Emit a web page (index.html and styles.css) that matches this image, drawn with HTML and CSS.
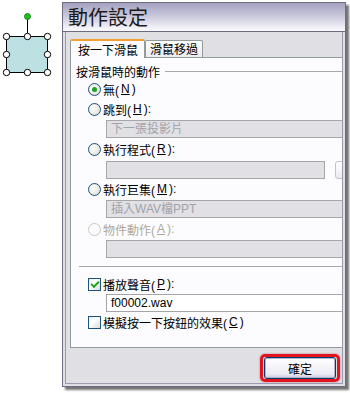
FILE: index.html
```html
<!DOCTYPE html>
<html lang="zh-Hant">
<head>
    <meta charset="UTF-8">
    <title>動作設定</title>
    <link rel="stylesheet" href="styles.css">
</head>
<body>
    <div class="stage">
        <svg class="shape" width="62" height="100" viewBox="0 0 62 100">
            <line x1="27.5" y1="19" x2="27.5" y2="36" stroke="#000" stroke-width="1"/>
            <rect x="6.5" y="36.5" width="41" height="36" fill="#bde0e2" stroke="#000" stroke-width="1"/>
            <circle cx="27.5" cy="16.5" r="3" fill="#1fc41f" stroke="#0a6a0a" stroke-width="0.8"/>
            <g fill="#fff" stroke="#000" stroke-width="1">
                <circle cx="6.5" cy="36.5" r="3.2"/>
                <circle cx="27.5" cy="36.5" r="3.2"/>
                <circle cx="47.5" cy="36.5" r="3.2"/>
                <circle cx="6.5" cy="54.5" r="3.2"/>
                <circle cx="47.5" cy="54.5" r="3.2"/>
                <circle cx="6.5" cy="72.5" r="3.2"/>
                <circle cx="27.5" cy="72.5" r="3.2"/>
                <circle cx="47.5" cy="72.5" r="3.2"/>
            </g>
        </svg>

        <div class="dialog">
            <div class="titlebar">動作設定</div>
            <div class="dlg-body">
                <div class="tabs">
                    <div class="tab active">按一下滑鼠</div>
                    <div class="tab">滑鼠移過</div>
                </div>
                <div class="panel">
                    <div class="group-title"><span>按滑鼠時的動作</span></div>

                    <div class="opt"><span class="radio checked"></span>無(<u>N</u>)</div>
                    <div class="opt"><span class="radio"></span>跳到(<u>H</u>):</div>
                    <div class="field disabled">下一張投影片</div>

                    <div class="opt"><span class="radio"></span>執行程式(<u>R</u>):</div>
                    <div class="field-row">
                        <div class="field disabled short"></div>
                        <div class="browse"></div>
                    </div>

                    <div class="opt"><span class="radio"></span>執行巨集(<u>M</u>):</div>
                    <div class="field disabled">插入WAV檔PPT</div>

                    <div class="opt off"><span class="radio"></span>物件動作(<u>A</u>):</div>
                    <div class="field disabled"></div>

                    <div class="separator"></div>

                    <div class="opt check-row"><span class="checkbox checked"></span>播放聲音(<u>P</u>):</div>
                    <div class="field sound">f00002.wav</div>
                    <div class="opt check-row"><span class="checkbox"></span>模擬按一下按鈕的效果(<u>C</u>)</div>
                </div>
                <div class="footer">
                    <div class="ok-ring">
                        <button type="button" class="ok">確定</button>
                    </div>
                </div>
            </div>
        </div>
    </div>
</body>
</html>
```

FILE: styles.css
```css
body {
    margin: 0;
    background: #fff;
    font-family: "Liberation Sans", "Noto Sans CJK TC", sans-serif;
    font-size: 12px;
    color: #000;
}
.stage {
    display: flex;
    align-items: flex-start;
    width: 350px;
    height: 393px;
    overflow: hidden;
}
.shape {
    flex: none;
}
.dialog {
    flex: none;
    width: 284px;
    height: 385px;
    margin-top: 2px;
    box-sizing: border-box;
    border: 1px solid #6f6d84;
    padding: 0 2px 2px;
    background: #e0dfe3;
    overflow: hidden;
    box-shadow: 3px 3px 2px rgba(0, 0, 0, 0.55);
    display: flex;
    flex-direction: column;
}
.titlebar {
    margin: 0 -2px;
    height: 28px;
    border-bottom: 1px solid #6d6b80;
    background: linear-gradient(#a4a1bf, #c4c2d8 40%, #f7f7fb 95%);
    font-family: "Noto Sans CJK TC", sans-serif;
    font-size: 20px;
    line-height: 27px;
    color: #1b1b1b;
    padding-left: 5px;
}
.dlg-body {
    flex: 1;
    border: 1px solid #9c9ab0;
    border-top: none;
    padding: 6px 0 0 4px;
    overflow: hidden;
    display: flex;
    flex-direction: column;
}
.tabs {
    display: flex;
    align-items: flex-end;
    height: 19px;
    position: relative;
    z-index: 1;
}
.tab {
    font-family: "Noto Sans CJK TC", sans-serif;
    height: 16px;
    line-height: 16px;
    padding: 0 4px;
    border: 1px solid #919b9c;
    border-bottom: none;
    border-radius: 2px 2px 0 0;
    background: linear-gradient(#ffffff, #ecebf0);
}
.tab.active {
    height: 17px;
    line-height: 18px;
    padding: 0 6px 0 7px;
    border-top: 2px solid #f0a030;
    background: #fcfcfe;
    margin-bottom: -1px;
}
.panel {
    width: 290px;
    height: 289px;
    border: 1px solid #919b9c;
    background: #fcfcfe;
    padding-top: 5px;
    box-sizing: border-box;
    height: 291px;
}
.group-title {
    display: flex;
    align-items: center;
    height: 16px;
    padding-left: 5px;
    font-family: "Noto Sans CJK TC", sans-serif;
}
.group-title::after {
    content: "";
    flex: 1;
    margin-left: 5px;
    border-top: 1px solid #a8a7ab;
}
.opt {
    display: flex;
    align-items: center;
    gap: 2px;
    height: 20px;
    padding-left: 17px;
}
.opt.off {
    color: #aca899;
}
.radio {
    width: 11px;
    height: 11px;
    border: 1px solid #1c5180;
    border-radius: 50%;
    background: radial-gradient(circle at 35% 35%, #ffffff, #e4e4de 70%, #c9c9c2);
    display: flex;
    align-items: center;
    justify-content: center;
}
.radio.checked::after {
    content: "";
    width: 5px;
    height: 5px;
    border-radius: 50%;
    background: #21a121;
}
.opt.off .radio {
    border-color: #cac8bb;
    background: #fcfcfe;
}
.checkbox {
    width: 11px;
    height: 11px;
    border: 1px solid #1c5180;
    background: linear-gradient(135deg, #ececea, #ffffff 40%, #dcdcd6);
    display: flex;
    align-items: center;
    justify-content: center;
}
.checkbox.checked::after {
    content: "";
    width: 6px;
    height: 3px;
    border-left: 2px solid #21a121;
    border-bottom: 2px solid #21a121;
    transform: translateY(-1px) rotate(-45deg);
}
.field {
    margin-left: 35px;
    width: 250px;
    height: 18px;
    box-sizing: border-box;
    border: 1px solid #a6a5aa;
    line-height: 16px;
    padding-left: 4px;
}
.field.disabled {
    background: #e1e0e5;
    color: #a3a2a6;
    margin-top: 1px;
    margin-bottom: 1px;
}
.field-row {
    display: flex;
    gap: 10px;
    margin-top: 2px;
}
.field.short {
    width: 222px;
    margin: 0 0 0 35px;
}
.browse {
    width: 24px;
    height: 18px;
    box-sizing: border-box;
    border: 1px solid #c3c2c8;
    border-radius: 3px;
    background: linear-gradient(#ffffff, #ecebef);
}
.separator {
    margin: 8px 0 7px 8px;
    border-top: 1px solid #a8a7ab;
}
.field.sound {
    background: #fff;
    border-color: #a6a5aa;
    height: 18px;
}
.footer {
    display: flex;
    justify-content: flex-end;
    padding: 6px 2px 0 0;
}
.ok-ring {
    border: 3px solid #e4141e;
    border-radius: 5px;
    padding: 0 1px;
    box-shadow: 0 0 2px rgba(120, 0, 0, 0.5);
    display: flex;
    align-items: center;
    height: 22px;
}
.ok {
    width: 72px;
    height: 22px;
    border: 1px solid #003c74;
    border-radius: 3px;
    background: linear-gradient(#ffffff, #ecebf3 80%, #c9c8dc);
    box-shadow: inset 0 0 0 1px #b6b4cc;
    font-family: "Noto Sans CJK TC", sans-serif;
    font-size: 12px;
    color: #000;
    padding: 0;
}
```
